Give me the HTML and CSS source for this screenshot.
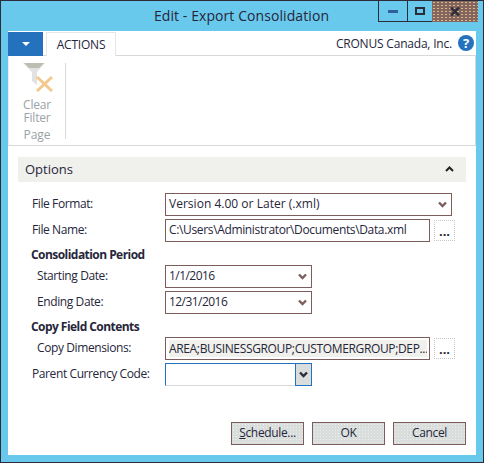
FILE: index.html
```html
<!DOCTYPE html>
<html lang="en">
<head>
    <meta charset="UTF-8">
    <title>Edit - Export Consolidation</title>
    <link rel="stylesheet" href="styles.css">
</head>
<body>
    <div class="window">
        <!-- Title bar -->
        <div class="titlebar">
            <span></span>
            <h1 class="title">Edit - Export Consolidation</h1>
            <div class="controls">
                <div class="control control-min"><i></i></div>
                <div class="control control-max"><i></i></div>
                <div class="control control-close">
                    <svg width="10" height="9" viewBox="0 0 10 9"><path d="M1 0.5L9 8.5M9 0.5L1 8.5" stroke="#2b2b3a" stroke-width="2.4" fill="none"/></svg>
                </div>
            </div>
        </div>

        <div class="content">
            <!-- Tabs -->
            <div class="tabs">
                <div class="app-tab"><i></i></div>
                <div class="tab">ACTIONS</div>
                <div class="company">CRONUS Canada, Inc.</div>
                <div class="help">?</div>
            </div>

            <!-- Ribbon -->
            <div class="ribbon">
                <div class="ribbon-group">
                    <svg class="filter-icon" width="32" height="30" viewBox="0 0 32 30">
                        <path d="M1 1H23L15 10V23L10 19V10Z" fill="#e2e2e2"/>
                        <path d="M2 1H22L17 6H7Z" fill="#bdbdb2"/>
                        <path d="M15 15L30 29M30 15L15 29" stroke="#f2c98c" stroke-width="3" fill="none"/>
                    </svg>
                    <div class="ribbon-label">Clear<br>Filter</div>
                    <div class="ribbon-caption">Page</div>
                </div>
            </div>

            <!-- Options -->
            <div class="section-head">
                <span>Options</span>
                <svg width="9" height="6" viewBox="0 0 9 6"><path d="M1 5L4.5 1.5L8 5" stroke="#222" stroke-width="2" fill="none"/></svg>
            </div>

            <div class="form">
                <div class="row">
                    <label class="label">File Format:</label>
                    <div class="field field-format">
                        <span class="value value-format">Version 4.00 or Later (.xml)</span>
                        <svg class="chevron" width="9" height="7" viewBox="0 0 9 7"><path d="M1 1.5L4.5 5L8 1.5" stroke="#7d5d5c" stroke-width="2.4" fill="none"/></svg>
                    </div>
                </div>
                <div class="row">
                    <label class="label">File Name:</label>
                    <div class="field field-wide">
                        <span class="value value-path">C:\Users\Administrator\Documents\Data.xml</span>
                    </div>
                    <div class="more">...</div>
                </div>

                <div class="group-title">Consolidation Period</div>
                <div class="row">
                    <label class="label label-sub">Starting Date:</label>
                    <div class="field field-date">
                        <span class="value value-date">1/1/2016</span>
                        <svg class="chevron" width="9" height="7" viewBox="0 0 9 7"><path d="M1 1.5L4.5 5L8 1.5" stroke="#7d5d5c" stroke-width="2.4" fill="none"/></svg>
                    </div>
                </div>
                <div class="row">
                    <label class="label label-sub">Ending Date:</label>
                    <div class="field field-date">
                        <span class="value value-date">12/31/2016</span>
                        <svg class="chevron" width="9" height="7" viewBox="0 0 9 7"><path d="M1 1.5L4.5 5L8 1.5" stroke="#7d5d5c" stroke-width="2.4" fill="none"/></svg>
                    </div>
                </div>

                <div class="group-title">Copy Field Contents</div>
                <div class="row">
                    <label class="label label-sub">Copy Dimensions:</label>
                    <div class="field field-wide field-readonly">
                        <span class="value value-path">AREA;BUSINESSGROUP;CUSTOMERGROUP;DEP...</span>
                    </div>
                    <div class="more">...</div>
                </div>
                <div class="row">
                    <label class="label">Parent Currency Code:</label>
                    <div class="field field-date field-focus">
                        <span class="value"></span>
                        <div class="drop">
                            <svg width="9" height="7" viewBox="0 0 9 7"><path d="M1 1.5L4.5 5L8 1.5" stroke="#2b2b3a" stroke-width="2.4" fill="none"/></svg>
                        </div>
                    </div>
                </div>
            </div>

            <!-- Buttons -->
            <div class="footer">
                <div class="button button-schedule"><span><u>S</u>chedule...</span></div>
                <div class="button">OK</div>
                <div class="button">Cancel</div>
            </div>
        </div>
    </div>
</body>
</html>
```

FILE: styles.css
```css
html, body {
    margin: 0;
    padding: 0;
}

body {
    width: 484px;
    height: 463px;
    overflow: hidden;
    font-family: "Open Sans", "Liberation Sans", sans-serif;
    font-size: 12px;
    color: #26263a;
}

.window {
    box-sizing: border-box;
    width: 484px;
    height: 463px;
    display: flex;
    flex-direction: column;
    background-color: #69c9ec;
    border: 1px solid #2b2b3a;
    padding: 0 7px 7px;
}

/* Title bar */
.titlebar {
    height: 30px;
    flex: none;
    display: grid;
    grid-template-columns: 1fr auto 1fr;
    margin-right: -2px;
}

.title {
    margin: 0 0 0 -3px;
    font-size: 14px;
    font-weight: normal;
    line-height: 29px;
    letter-spacing: 0.08px;
}

.controls {
    justify-self: end;
    display: flex;
    align-items: flex-start;
}

.control {
    box-sizing: border-box;
    height: 21px;
    display: flex;
    align-items: center;
    justify-content: center;
    border-bottom: 1px solid #2b2b3a;
    border-left: 1px solid #2b2b3a;
}

.control-min {
    width: 29px;
}

.control-min i {
    width: 10px;
    height: 3px;
    background-color: #2f5f9e;
}

.control-max {
    width: 25px;
}

.control-max i {
    box-sizing: border-box;
    width: 10px;
    height: 8px;
    border: 2px solid #2b2b3a;
}

.control-close {
    width: 46px;
    border: none;
    background-color: #84665f;
    background-image: radial-gradient(circle, #d8b98a 0.6px, transparent 0.9px);
    background-size: 4px 3px;
}

/* Tabs */
.content {
    flex: 1;
    display: flex;
    flex-direction: column;
    background-color: white;
}

.tabs {
    height: 24px;
    flex: none;
    display: flex;
    align-items: flex-end;
    background-color: white;
    border-bottom: 1px solid #d8d8d8;
}

.app-tab {
    width: 35px;
    height: 24px;
    margin-bottom: -1px;
    display: flex;
    align-items: center;
    justify-content: center;
    background-color: #2472bd;
}

.app-tab i {
    width: 0;
    height: 0;
    border-left: 4px solid transparent;
    border-right: 4px solid transparent;
    border-top: 4px solid white;
}

.tab {
    box-sizing: border-box;
    width: 70px;
    height: 24px;
    margin-left: 3px;
    margin-bottom: -1px;
    border: 1px solid #e6e6e6;
    border-bottom: none;
    background-color: white;
    text-align: center;
    line-height: 24px;
    letter-spacing: -0.2px;
}

.company {
    margin-left: auto;
    align-self: center;
    letter-spacing: -0.2px;
}

.help {
    width: 16px;
    height: 16px;
    align-self: center;
    margin: 0 2px 0 6px;
    border-radius: 50%;
    background-color: #2472bd;
    color: white;
    text-align: center;
    font-size: 13px;
    font-weight: bold;
    line-height: 16px;
}

/* Ribbon */
.ribbon {
    box-sizing: border-box;
    height: 90px;
    flex: none;
    padding: 7px 0;
    border-left: 1px solid #ececec;
    border-right: 1px solid #d8d8d8;
    border-bottom: 1px solid #d8d8d8;
}

.ribbon-group {
    box-sizing: border-box;
    width: 57px;
    height: 76px;
    display: flex;
    flex-direction: column;
    align-items: center;
    border-right: 1px solid #d8d8d8;
    color: #9aa3a6;
    font-size: 12px;
    line-height: 13px;
}

.filter-icon {
    flex: none;
    margin: -1px 0 0 2px;
}

.ribbon-label {
    flex: none;
    margin-top: 6px;
    text-align: center;
    letter-spacing: -0.2px;
}

.ribbon-caption {
    flex: none;
    margin-top: 4px;
}

/* Options */
.section-head {
    height: 25px;
    flex: none;
    margin: 11px 10px 0;
    padding: 0 12px 2px 7px;
    box-sizing: border-box;
    display: flex;
    align-items: center;
    justify-content: space-between;
    background-color: #f0f0ec;
    font-size: 13px;
}

.form {
    margin: 11px 0 0 24px;
    display: flex;
    flex-direction: column;
    gap: 3px;
}

.row {
    height: 23px;
    display: flex;
    align-items: center;
}

.label {
    width: 133px;
    flex: none;
    letter-spacing: -0.4px;
    padding-bottom: 2px;
}

.label-sub {
    padding-left: 5px;
    width: 128px;
}

.group-title {
    height: 17px;
    margin-left: -1px;
    line-height: 20px;
    font-weight: bold;
    letter-spacing: -0.55px;
}

.field {
    box-sizing: border-box;
    height: 23px;
    display: flex;
    align-items: center;
    justify-content: space-between;
    padding: 0 4px 0 3px;
    border: 1px solid #7d5d5c;
    background-color: white;
}

.value {
    white-space: nowrap;
    letter-spacing: -0.2px;
    padding-bottom: 2px;
}

.value-format {
    letter-spacing: 0.02px;
}

.value-path {
    letter-spacing: -0.35px;
}

.value-date {
    letter-spacing: -0.55px;
}

.field-format {
    width: 287px;
}

.field-wide {
    width: 265px;
}

.field-date {
    width: 147px;
}

.field-readonly {
    padding-right: 2px;
}

.field-readonly .value {
    flex: 1;
    overflow: hidden;
    background-color: #f0f0ec;
    line-height: 17px;
    padding: 0;
}

.field-focus {
    padding: 0;
    border-color: #d8d8d8;
    border-top-color: #2472bd;
    border-left-color: #2472bd;
    justify-content: flex-end;
}

.drop {
    box-sizing: border-box;
    width: 17px;
    height: 23px;
    margin: -1px -1px -1px 0;
    display: flex;
    align-items: center;
    justify-content: center;
    border: 1px solid #2472bd;
    background-color: #d9dedd;
}

.more {
    box-sizing: border-box;
    width: 21px;
    height: 21px;
    margin-left: 4px;
    border: 1px dotted #c8c8c0;
    text-align: center;
    font-size: 13px;
    font-weight: bold;
    line-height: 20px;
}

/* Buttons */
.footer {
    margin-top: auto;
    padding: 0 10px 10px 0;
    display: flex;
    justify-content: flex-end;
    gap: 8px;
}

.button {
    box-sizing: border-box;
    width: 73px;
    height: 23px;
    border: 1px solid #7d5d5c;
    background-color: #d9dedd;
    background-image: radial-gradient(circle, #eef0ee 0.5px, transparent 0.8px);
    background-size: 3px 3px;
    text-align: center;
    line-height: 20px;
    letter-spacing: -0.35px;
}
```
